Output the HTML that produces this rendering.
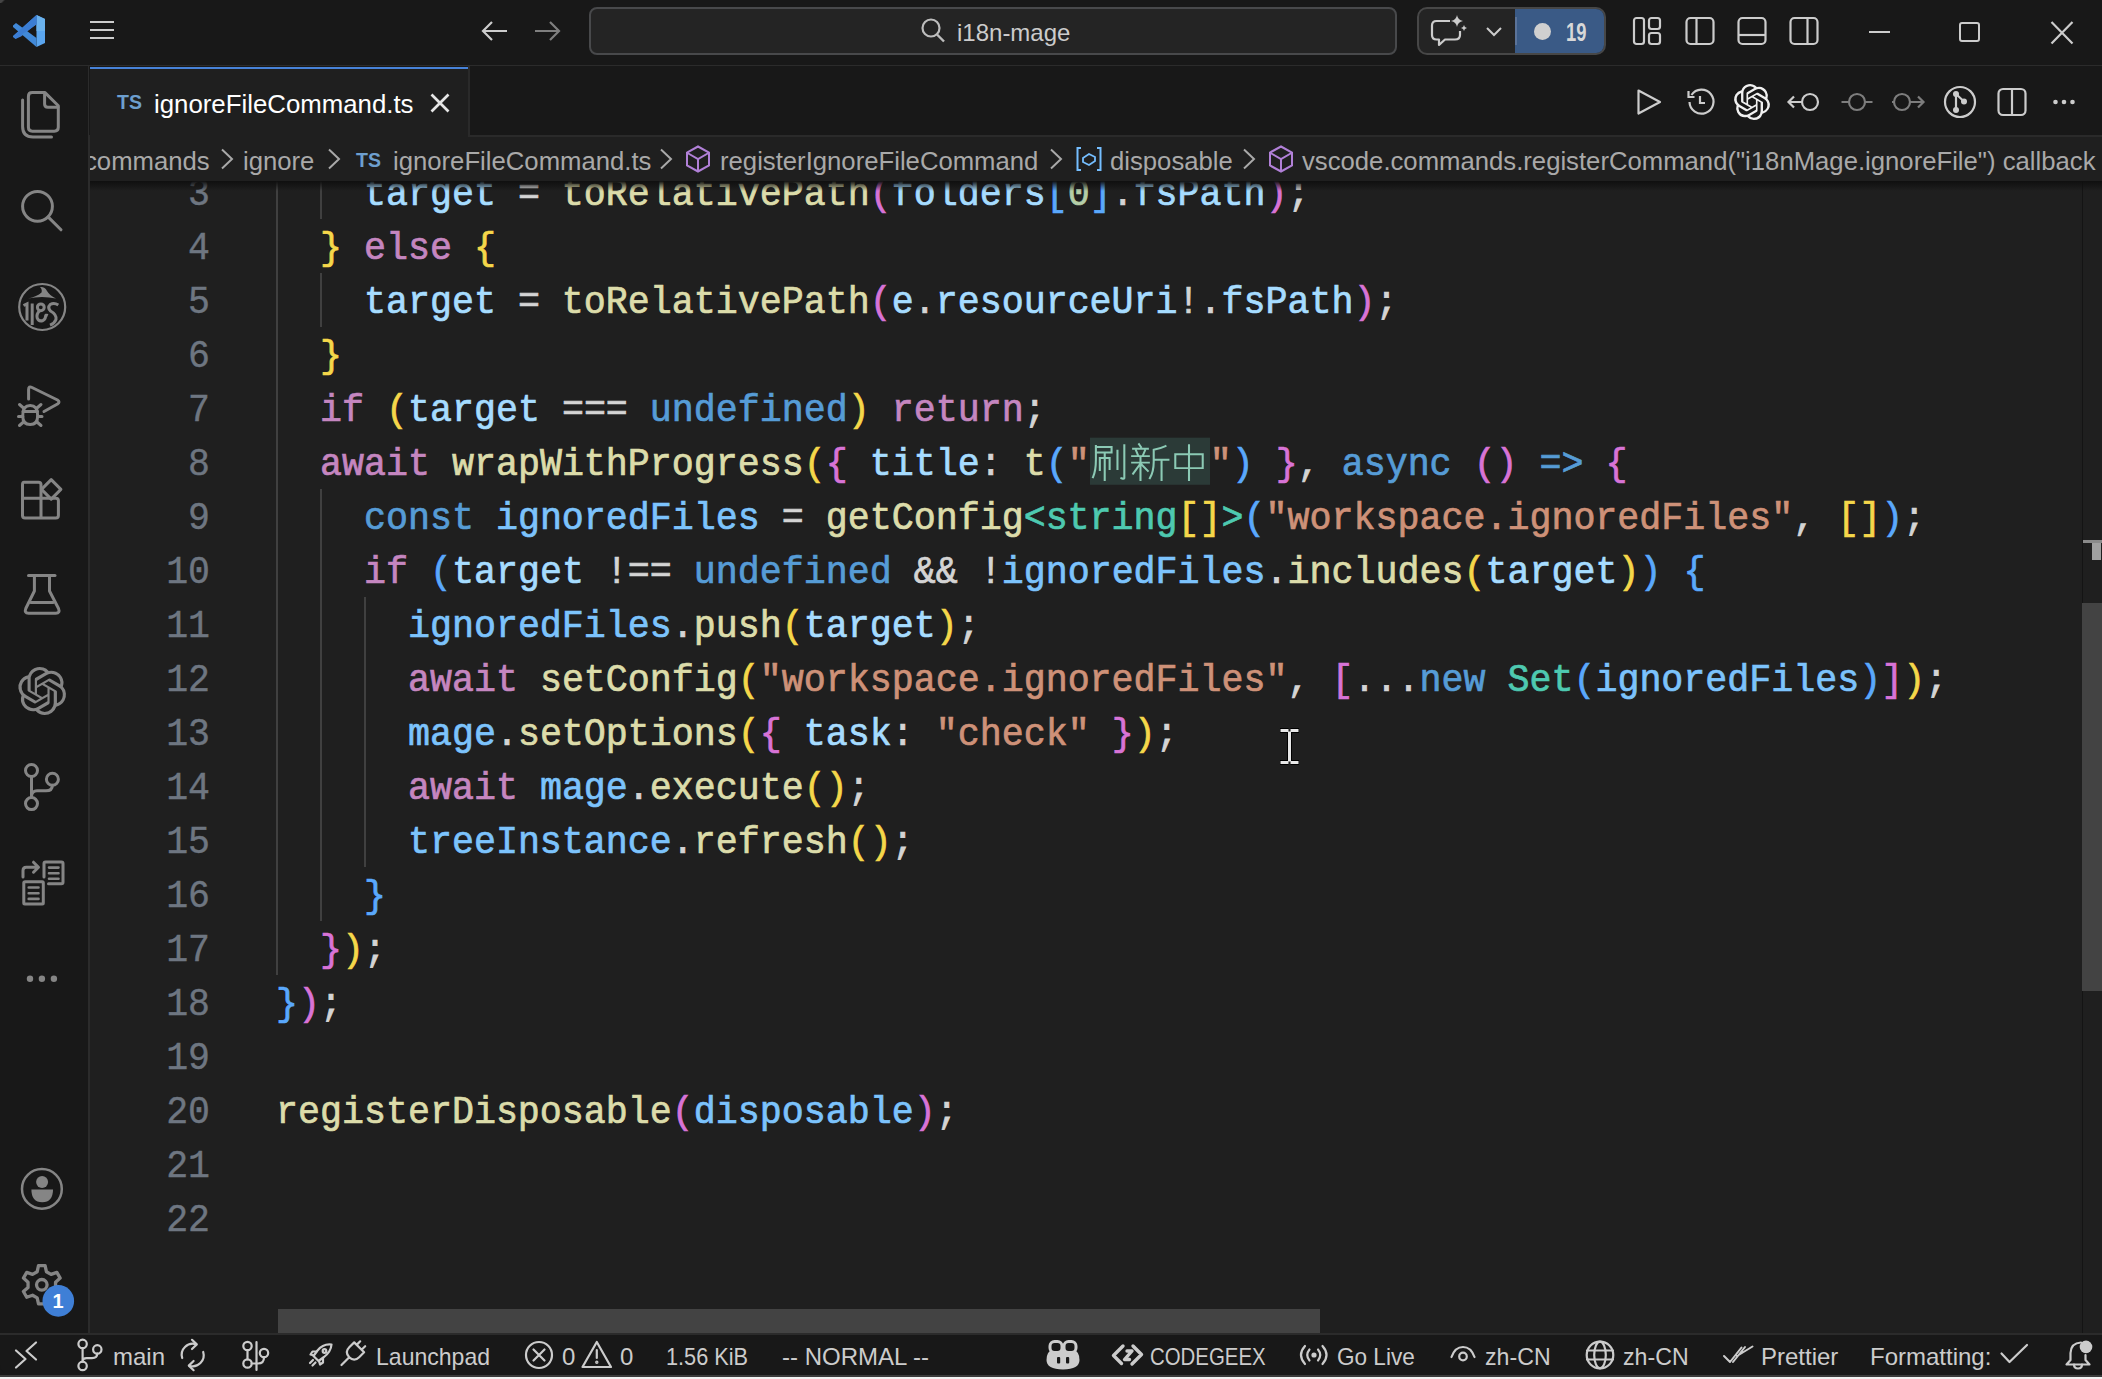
<!DOCTYPE html>
<html><head><meta charset="utf-8">
<style>
*{margin:0;padding:0;box-sizing:border-box}
html,body{width:2102px;height:1379px;overflow:hidden;background:#181818}
body{position:relative;font-family:"Liberation Sans",sans-serif;color:#cccccc}
.abs{position:absolute}
svg{position:absolute;overflow:visible}
#title{left:0;top:0;width:2102px;height:66px;background:#181818;border-bottom:1px solid #2b2b2b}
#act{left:0;top:66px;width:90px;height:1267px;background:#181818;border-right:2px solid #2b2b2b}
#tabs{left:89px;top:66px;width:2013px;height:71px;background:#181818;border-bottom:2px solid #2a2a2a}
#tab{left:90px;top:67px;width:378px;height:70px;background:#1f1f1f;border-top:2px solid #4782d8}
#bc{left:90px;top:137px;width:2012px;height:44px;background:#1f1f1f;overflow:hidden;white-space:nowrap}
#ed{left:90px;top:181px;width:2012px;height:1152px;background:#1f1f1f;overflow:hidden}
#status{left:0;top:1333px;width:2102px;height:42px;background:#181818;border-top:2px solid #2b2b2b;white-space:nowrap;border-radius:0 0 10px 10px}
#bottomstrip{left:0;top:1375px;width:2102px;height:4px;background:linear-gradient(#3a3a3a 0,#3a3a3a 2px,#f2f2f2 2px)}
.code{position:absolute;left:186px;font-family:"Liberation Mono",monospace;font-size:36.65px;line-height:54px;height:54px;white-space:pre;color:#d4d4d4;-webkit-text-stroke:0.7px currentColor;transform:translateY(-1px) scaleY(1.07);transform-origin:0 35px}
.ln{position:absolute;left:0;width:120px;text-align:right;font-family:"Liberation Mono",monospace;font-size:36.53px;line-height:54px;height:54px;color:#6e7681;-webkit-text-stroke:0.4px currentColor;transform:scaleY(1.08);transform-origin:0 40px}
.g{position:absolute;width:2px;background:#404040}
.v{color:#a6dcff}.c{color:#7cc3fc}.f{color:#dcdcaa}.k{color:#c586c0}.b{color:#569cd6}.s{color:#ce9178}.t{color:#4ec9b0}.n{color:#b5cea8}
.y{color:#f5d74a}.p{color:#d873d6}.bl{color:#5aa8fc}
.ui{font-family:"Liberation Sans",sans-serif}
</style></head><body>

<!-- TITLE BAR -->
<div id="title" class="abs">
<!-- vscode logo -->
<svg style="left:0;top:0" width="60" height="64" viewBox="0 0 60 64">
  <path d="M36.5 15 L45 19 L45 43 L36.5 47 Z" fill="#5aa5ee"/>
  <path d="M36.5 15 L45 19 L45 31 L36.5 31 Z" fill="#6ab1ec"/>
  <path d="M36.5 15 L36.5 24 L21 36.5 L15.5 39 L13 37 L13 36 Z" fill="#3f7fd6"/>
  <path d="M13 25.5 L16 23 L36.5 38 L36.5 47 L13 27 Z" fill="#4189d8"/>
  <path d="M36.5 15 L36.5 24.5 L22.5 34 L16 38.5 L13.5 37 L13 36.2 Z" fill="#3b7dd3"/>
</svg>
<!-- hamburger -->
<div class="abs" style="left:90px;top:21px;width:24px;height:2px;background:#cccccc"></div>
<div class="abs" style="left:90px;top:29px;width:24px;height:2px;background:#cccccc"></div>
<div class="abs" style="left:90px;top:37px;width:24px;height:2px;background:#cccccc"></div>
<!-- back / forward -->
<svg style="left:480px;top:18px" width="30" height="26" viewBox="0 0 30 26"><path d="M3 13 H27 M12 4 L3 13 L12 22" fill="none" stroke="#cccccc" stroke-width="2.2"/></svg>
<svg style="left:532px;top:18px" width="30" height="26" viewBox="0 0 30 26"><path d="M3 13 H27 M18 4 L27 13 L18 22" fill="none" stroke="#7f7f7f" stroke-width="2.2"/></svg>
<!-- search box -->
<div class="abs" style="left:589px;top:7px;width:808px;height:48px;border:2px solid #48494b;border-radius:8px;background:#242424"></div>
<svg style="left:918px;top:17px" width="30" height="28" viewBox="0 0 30 28"><circle cx="13" cy="11" r="8.5" fill="none" stroke="#bdbdbd" stroke-width="2.2"/><path d="M19 17.5 L26 24.5" stroke="#bdbdbd" stroke-width="2.4"/></svg>
<div class="abs ui" style="left:957px;top:18px;font-size:24px;line-height:30px;color:#cccccc">i18n-mage</div>
<!-- chat group -->
<div class="abs" style="left:1417px;top:7px;width:189px;height:48px;border:2px solid #474747;border-radius:10px;background:#242424;overflow:hidden">
  <div class="abs" style="left:96px;top:0;width:93px;height:48px;background:#3a5a86"></div>
</div>
<svg style="left:1428px;top:12px" width="42" height="36" viewBox="0 0 42 36">
  <path d="M22 9 H8.5 Q4 9 4 13.5 V23 Q4 27.5 8.5 27.5 H11 V33 L17 27.5 H27 Q32 27.5 32 23 V19" fill="none" stroke="#cccccc" stroke-width="2.2" stroke-linejoin="round"/>
  <path d="M29 3 Q29.8 8.2 35 9 Q29.8 9.8 29 15 Q28.2 9.8 23 9 Q28.2 8.2 29 3 Z" fill="#cccccc"/>
  <path d="M36 13 Q36.4 15.6 39 16 Q36.4 16.4 36 19 Q35.6 16.4 33 16 Q35.6 15.6 36 13 Z" fill="#cccccc"/>
</svg>
<svg style="left:1484px;top:24px" width="20" height="14" viewBox="0 0 20 14"><path d="M3 4 L10 11 L17 4" fill="none" stroke="#cccccc" stroke-width="2"/></svg>
<div class="abs" style="left:1534px;top:22.5px;width:17px;height:17px;border-radius:50%;background:#d0d0d0"></div><div class="abs" style="left:1515px;top:17px;width:2px;height:28px;background:#5b7399"></div>
<div class="abs ui" style="left:1566px;top:17px;font-size:25.5px;line-height:30px;font-weight:bold;color:#d8d8d8;transform:scaleX(0.72);transform-origin:0 0">19</div>
<!-- layout icons -->
<svg style="left:1630px;top:14px" width="36" height="34" viewBox="0 0 36 34">
  <rect x="4" y="4" width="10" height="26" rx="2.5" fill="none" stroke="#cccccc" stroke-width="2.2"/>
  <rect x="19" y="4" width="11" height="11" rx="2.5" fill="none" stroke="#cccccc" stroke-width="2.2"/>
  <rect x="19" y="19" width="11" height="11" rx="2.5" fill="none" stroke="#cccccc" stroke-width="2.2"/>
</svg>
<svg style="left:1682px;top:14px" width="36" height="34" viewBox="0 0 36 34"><rect x="4.5" y="4" width="27" height="26" rx="4" fill="none" stroke="#cccccc" stroke-width="2.2"/><path d="M14.5 4 V30" stroke="#cccccc" stroke-width="2.2"/></svg>
<svg style="left:1734px;top:14px" width="36" height="34" viewBox="0 0 36 34"><rect x="4.5" y="4" width="27" height="26" rx="4" fill="none" stroke="#cccccc" stroke-width="2.2"/><path d="M4.5 21 H31.5" stroke="#cccccc" stroke-width="2.2"/></svg>
<svg style="left:1786px;top:14px" width="36" height="34" viewBox="0 0 36 34"><rect x="4.5" y="4" width="27" height="26" rx="4" fill="none" stroke="#cccccc" stroke-width="2.2"/><path d="M21.5 4 V30" stroke="#cccccc" stroke-width="2.2"/></svg>
<!-- window controls -->
<div class="abs" style="left:1869px;top:31px;width:21px;height:2px;background:#cccccc"></div>
<div class="abs" style="left:1959px;top:22px;width:21px;height:20px;border:2px solid #cccccc;border-radius:3px"></div>
<svg style="left:2048px;top:19px" width="28" height="28" viewBox="0 0 28 28"><path d="M3.5 3 L24.5 24.5 M24.5 3 L3.5 24.5" stroke="#cccccc" stroke-width="2.2"/></svg>
</div>

<!-- ACTIVITY BAR -->
<div id="act" class="abs">
<svg style="left:0;top:0" width="88" height="1267" viewBox="0 66 88 1267">
<g fill="none" stroke="#858585" stroke-width="3" stroke-linejoin="round" stroke-linecap="round">
  <!-- files -->
  <path d="M28.4 96.5 Q28.4 92.6 32.3 92.6 H45 L58.3 105.8 V127.3 Q58.3 131.2 54.4 131.2 H32.3 Q28.4 131.2 28.4 127.3 Z"/>
  <path d="M44.6 93 V104 Q44.6 107.2 47.8 107.2 H58"/>
  <path d="M22.6 100 V126.5 Q22.6 137 33 137 H51.5"/>
  <!-- search -->
  <circle cx="37.5" cy="206.3" r="14.9"/>
  <path d="M48.3 217.1 L61 229.8"/>
  <!-- debug -->
  <path d="M28.6 399 V389.5 Q28.6 385.8 32 387.5 L57.5 400 Q60.5 402 57.5 404 L44 411.5"/>
  <path d="M22.8 415 Q22.8 405.5 30.2 405.5 Q37.6 405.5 37.6 415 V416.5 Q37.6 424.5 30.2 424.5 Q22.8 424.5 22.8 416.5 Z"/>
  <path d="M23 411.5 H37.5 M23.5 408 L19.5 404.5 M37 408 L41 404.5 M22.8 416.5 H18.5 M37.6 416.5 H42 M23.5 422 L19.5 425.5 M37 422 L41 425.5"/>
  <!-- extensions -->
  <path d="M24 482.2 H38.5 Q41 482.2 41 484.7 V498.3 H22.5 V484.7 Q22.5 482.2 24 482.2 Z"/>
  <path d="M22.5 498.3 V515.5 Q22.5 518.1 25 518.1 H55.8 Q58.4 518.1 58.4 515.5 V500.8 Q58.4 498.3 55.8 498.3 H41 V518.1"/>
  <path d="M51.2 479.6 L60.9 489.4 L51.2 499.1 L41.5 489.4 Z"/>
  <!-- flask -->
  <path d="M28.5 575.5 H55"/>
  <path d="M34.4 575.5 V591 L25.8 608.5 Q24 613.2 28.5 613.2 H55.8 Q60.4 613.2 58.5 608.5 L49.5 591 V575.5"/>
  <path d="M31 602.5 H53"/>
  <!-- git -->
  <circle cx="31.5" cy="770.5" r="6"/>
  <circle cx="31.5" cy="803.6" r="6"/>
  <circle cx="52.4" cy="779.2" r="6"/>
  <path d="M31.5 776.5 V797.6 M52.4 785.2 Q52.4 790.8 46 790.8 H37 Q32 790.8 31.5 796"/>
  <!-- compare docs -->
  <path d="M44 877 V863.5 Q44 862 45.5 862 H61.5 Q63 862 63 863.5 V882.3 Q63 883.8 61.5 883.8 H48.5"/>
  <path d="M25.3 881.7 H42.3 Q43.3 881.7 43.3 882.7 V903 Q43.3 904 42.3 904 H24.8 Q23.8 904 23.8 903 V882.7 Q23.8 881.7 25.3 881.7 Z"/>
  <path d="M23 877 V870.5 Q23 867.2 26.3 867.2 H38 M33.5 862.2 L38.5 867.2 L33.5 872.2"/>
</g>
<g stroke="#858585" stroke-width="2.6" stroke-linecap="round">
  <path d="M49 867.6 H58.5 M49 873.2 H58.5 M49 878.7 H58.5 M28.7 887.5 H38.5 M28.7 893.2 H38.5 M28.7 898.9 H38.5"/>
</g>
<!-- i18n -->
<circle cx="42.2" cy="307" r="23" fill="none" stroke="#858585" stroke-width="2.2"/>
<path d="M28 298.5 Q42 295.5 56 298.5 Q50 296 47 291 Q45 286.5 40 287 Q42.5 289.5 41.5 292.5 Q37 296.5 28 298.5 Z" fill="#858585"/>
<g fill="none" stroke="#858585" stroke-width="3">
  <path d="M23.5 305.5 L27 303.8 V320.5"/>
  <path d="M32.2 303.5 V325"/>
  <circle cx="40.8" cy="307.3" r="3.4"/>
  <path d="M39.5 310.8 Q36.2 314 37.2 318 Q38.8 322 43 320.5 Q45.5 319 45.5 316.5 Q45.5 314.5 47.8 315.5"/>
  <path d="M58.3 305 Q54 302.2 50.2 304.5 Q47.2 307.5 50.5 311 Q56.8 314.5 56 319.5 Q54.5 323.5 50 325.2"/>
</g>
<!-- openai -->
<svg x="18.1" y="666.6" width="48.2" height="48.8" viewBox="0 0 24 24"><path fill="#858585" d="M22.28 9.82a5.98 5.98 0 0 0-.52-4.91 6.05 6.05 0 0 0-6.51-2.9A6.07 6.07 0 0 0 4.98 4.18a5.98 5.98 0 0 0-4 2.9 6.05 6.05 0 0 0 .74 7.1 5.98 5.98 0 0 0 .51 4.91 6.05 6.050 0 0 0 6.51 2.9A5.98 5.98 0 0 0 13.26 24a6.06 6.06 0 0 0 5.77-4.21 5.99 5.99 0 0 0 4-2.9 6.06 6.06 0 0 0-.75-7.07zM13.26 22.43a4.48 4.48 0 0 1-2.88-1.04l.14-.08 4.78-2.76a.8.8 0 0 0 .39-.68v-6.74l2.02 1.17a.07.07 0 0 1 .04.05v5.58a4.5 4.5 0 0 1-4.49 4.5zM3.6 18.3a4.47 4.47 0 0 1-.53-3.01l.14.08 4.78 2.76a.77.77 0 0 0 .78 0l5.84-3.37v2.33a.08.08 0 0 1-.03.06l-4.83 2.79a4.5 4.5 0 0 1-6.14-1.64zM2.34 7.9a4.49 4.49 0 0 1 2.37-1.97v5.68a.77.77 0 0 0 .39.68l5.81 3.35-2.02 1.17a.08.08 0 0 1-.07 0l-4.83-2.79A4.5 4.5 0 0 1 2.34 7.87zm16.6 3.86l-5.84-3.39L15.12 7.2a.08.08 0 0 1 .07 0l4.83 2.79a4.49 4.49 0 0 1-.68 8.1v-5.68a.79.79 0 0 0-.41-.67zm2.01-3.02l-.14-.09-4.77-2.78a.78.78 0 0 0-.78 0L9.41 9.23V6.9a.07.07 0 0 1 .03-.06l4.83-2.79a4.5 4.5 0 0 1 6.68 4.66zM8.31 12.86L6.290 11.7a.08.08 0 0 1-.04-.06V6.07a4.5 4.5 0 0 1 7.38-3.45l-.14.08L8.71 5.46a.8.8 0 0 0-.39.68zm1.1-2.37l2.6-1.5 2.6 1.5v3l-2.6 1.5-2.6-1.5z"/></svg>
<!-- more -->
<circle cx="30" cy="978.8" r="3.2" fill="#858585"/><circle cx="41.9" cy="978.8" r="3.2" fill="#858585"/><circle cx="53.9" cy="978.8" r="3.2" fill="#858585"/>
<!-- account -->
<circle cx="41.9" cy="1188.9" r="19.9" fill="none" stroke="#858585" stroke-width="2.5"/>
<circle cx="42.1" cy="1182" r="6" fill="#858585"/>
<path d="M31.4 1189.5 H53 Q53 1202.3 42.2 1202.3 Q31.4 1202.3 31.4 1189.5 Z" fill="#858585"/>
<!-- gear -->
<g fill="none" stroke="#858585" stroke-width="3" stroke-linejoin="round">
<g transform="translate(41.8,1286) scale(1.1) translate(-41.6,-1284)"><path d="M38.6 1265.5 H44.6 L45.8 1271 L50 1273.4 L55.3 1271.6 L58.3 1276.8 L54.1 1280.5 V1285.3 L58.3 1289 L55.3 1294.2 L50 1292.4 L45.8 1294.8 L44.6 1300.3 H38.6 L37.4 1294.8 L33.2 1292.4 L27.9 1294.2 L24.9 1289 L29.1 1285.3 V1280.5 L24.9 1276.8 L27.9 1271.6 L33.2 1273.4 L37.4 1271 Z"/>
<circle cx="41.6" cy="1282.9" r="4.8"/></g>
</g>
<circle cx="58.3" cy="1300.9" r="15.8" fill="#3f7fd6"/>
</svg>
<div class="abs ui" style="left:42px;top:1222px;width:32px;text-align:center;font-size:20px;line-height:26px;font-weight:bold;color:#ffffff">1</div>
</div>

<!-- TABS -->
<div id="tabs" class="abs"></div>
<div class="abs" style="left:468px;top:66px;width:2px;height:70px;background:#2a2a2a"></div>
<div id="tab" class="abs">
<div class="abs ui" style="left:27px;top:21px;font-size:19.5px;line-height:24px;font-weight:bold;color:#6d9fcf">TS</div>
<div class="abs ui" style="left:64px;top:18px;font-size:25.8px;line-height:34px;color:#ffffff">ignoreFileCommand.ts</div>
<svg style="left:338px;top:23px" width="24" height="22" viewBox="0 0 24 22"><path d="M3.5 2.5 L20.5 19.5 M20.5 2.5 L3.5 19.5" stroke="#e6e6e6" stroke-width="2.7"/></svg>
</div>
<!-- editor actions -->
<svg style="left:1632px;top:86px" width="34" height="32" viewBox="0 0 34 32"><path d="M6.5 4.5 L28 16 L6.5 27.5 Z" fill="none" stroke="#cccccc" stroke-width="2.2" stroke-linejoin="round"/></svg>
<svg style="left:1684px;top:86px" width="34" height="32" viewBox="0 0 34 32"><path d="M7.5 9 A12 12 0 1 1 5.5 16" fill="none" stroke="#cccccc" stroke-width="2.2"/><path d="M4.5 5 V11 H10.5" fill="none" stroke="#cccccc" stroke-width="2.2"/><path d="M16 10 V17 H21" fill="none" stroke="#cccccc" stroke-width="2.2"/></svg>
<svg style="left:1734px;top:84px" width="36" height="36" viewBox="0 0 24 24"><path fill="#f0f0f0" d="M22.28 9.82a5.98 5.98 0 0 0-.52-4.91 6.05 6.05 0 0 0-6.51-2.9A6.07 6.07 0 0 0 4.98 4.18a5.98 5.98 0 0 0-4 2.9 6.05 6.05 0 0 0 .74 7.1 5.98 5.98 0 0 0 .51 4.91 6.05 6.05 0 0 0 6.51 2.9A5.98 5.98 0 0 0 13.26 24a6.06 6.06 0 0 0 5.77-4.21 5.99 5.99 0 0 0 4-2.9 6.06 6.06 0 0 0-.75-7.07zM13.26 22.43a4.48 4.48 0 0 1-2.88-1.04l.14-.08 4.78-2.76a.8.8 0 0 0 .39-.68v-6.74l2.02 1.17a.07.07 0 0 1 .04.05v5.58a4.5 4.5 0 0 1-4.49 4.5zM3.6 18.3a4.47 4.47 0 0 1-.53-3.01l.14.08 4.78 2.76a.77.77 0 0 0 .78 0l5.84-3.37v2.33a.08.08 0 0 1-.03.06l-4.83 2.79a4.5 4.5 0 0 1-6.14-1.64zM2.34 7.9a4.49 4.49 0 0 1 2.37-1.97v5.68a.77.77 0 0 0 .39.68l5.81 3.35-2.02 1.17a.08.08 0 0 1-.07 0l-4.83-2.79A4.5 4.5 0 0 1 2.34 7.87zm16.6 3.86l-5.84-3.39L15.12 7.2a.08.08 0 0 1 .07 0l4.83 2.79a4.49 4.49 0 0 1-.68 8.1v-5.68a.79.79 0 0 0-.41-.67zm2.01-3.02l-.14-.09-4.77-2.78a.78.78 0 0 0-.78 0L9.41 9.23V6.9a.07.07 0 0 1 .03-.06l4.83-2.79a4.5 4.5 0 0 1 6.68 4.66zM8.31 12.86L6.29 11.7a.08.08 0 0 1-.04-.06V6.07a4.5 4.5 0 0 1 7.38-3.45l-.14.08L8.71 5.46a.8.8 0 0 0-.39.68zm1.1-2.37l2.6-1.5 2.6 1.5v3l-2.6 1.5-2.6-1.5z"/></svg>
<svg style="left:1784px;top:84px" width="40" height="36" viewBox="0 0 40 36"><circle cx="26" cy="18" r="8" fill="none" stroke="#cccccc" stroke-width="2.2"/><path d="M18 18 H5 M10 12.5 L4.5 18 L10 23.5" fill="none" stroke="#cccccc" stroke-width="2.2"/></svg>
<svg style="left:1838px;top:84px" width="38" height="36" viewBox="0 0 38 36"><circle cx="19" cy="18" r="8" fill="none" stroke="#7d7d7d" stroke-width="2.2"/><path d="M3.5 18 H11 M27 18 H34.5" fill="none" stroke="#7d7d7d" stroke-width="2.2"/></svg>
<svg style="left:1888px;top:84px" width="40" height="36" viewBox="0 0 40 36"><circle cx="14" cy="18" r="8" fill="none" stroke="#7d7d7d" stroke-width="2.2"/><path d="M4 18 H6 M22 18 H35 M30 12.5 L35.5 18 L30 23.5" fill="none" stroke="#7d7d7d" stroke-width="2.2"/></svg>
<svg style="left:1942px;top:84px" width="36" height="36" viewBox="0 0 36 36"><circle cx="18" cy="18" r="15" fill="none" stroke="#cccccc" stroke-width="2.2"/><circle cx="14" cy="10" r="3" fill="#cccccc"/><circle cx="14" cy="26" r="3" fill="#cccccc"/><circle cx="22" cy="17.5" r="3" fill="#cccccc"/><path d="M14 10 V26 M14 10 L22 17.5" stroke="#cccccc" stroke-width="2.2"/></svg>
<svg style="left:1995px;top:86px" width="34" height="32" viewBox="0 0 34 32"><rect x="3.5" y="3" width="27" height="26" rx="4.5" fill="none" stroke="#cccccc" stroke-width="2.2"/><path d="M17 3 V29" stroke="#cccccc" stroke-width="2.2"/></svg>
<svg style="left:2050px;top:92px" width="28" height="20" viewBox="0 0 28 20"><circle cx="5.5" cy="10" r="2.3" fill="#cccccc"/><circle cx="14" cy="10" r="2.3" fill="#cccccc"/><circle cx="22.5" cy="10" r="2.3" fill="#cccccc"/></svg>

<!-- BREADCRUMBS -->
<div id="bc" class="abs">
<div class="abs ui" style="left:-6px;top:7px;font-size:25.7px;line-height:34px;color:#a9a9a9">commands</div>
<svg style="left:129px;top:11px" width="16" height="22" viewBox="0 0 16 22"><path d="M3 1.5 L13 11 L3 20.5" fill="none" stroke="#a9a9a9" stroke-width="2"/></svg>
<div class="abs ui" style="left:153px;top:7px;font-size:25.7px;line-height:34px;color:#a9a9a9">ignore</div>
<svg style="left:236px;top:11px" width="16" height="22" viewBox="0 0 16 22"><path d="M3 1.5 L13 11 L3 20.5" fill="none" stroke="#a9a9a9" stroke-width="2"/></svg>
<div class="abs ui" style="left:266px;top:12px;font-size:19.5px;line-height:22px;font-weight:bold;color:#6d9fcf">TS</div>
<div class="abs ui" style="left:303px;top:7px;font-size:25.7px;line-height:34px;color:#a9a9a9">ignoreFileCommand.ts</div>
<svg style="left:568px;top:11px" width="16" height="22" viewBox="0 0 16 22"><path d="M3 1.5 L13 11 L3 20.5" fill="none" stroke="#a9a9a9" stroke-width="2"/></svg>
<svg style="left:593px;top:7px" width="30" height="30" viewBox="0 0 30 30"><path d="M15 2.5 L26 8.5 V21.5 L15 27.5 L4 21.5 V8.5 Z" fill="none" stroke="#b180d7" stroke-width="2"/><path d="M4.5 9 L15 15 L25.5 9 M15 15 V27" fill="none" stroke="#b180d7" stroke-width="2"/></svg>
<div class="abs ui" style="left:630px;top:7px;font-size:25.7px;line-height:34px;color:#a9a9a9">registerIgnoreFileCommand</div>
<svg style="left:958px;top:11px" width="16" height="22" viewBox="0 0 16 22"><path d="M3 1.5 L13 11 L3 20.5" fill="none" stroke="#a9a9a9" stroke-width="2"/></svg>
<svg style="left:984px;top:7px" width="30" height="30" viewBox="0 0 30 30"><path d="M7 4 H3.5 V26 H7 M23 4 H26.5 V26 H23" fill="none" stroke="#75beff" stroke-width="2"/><path d="M9 14 L15 10 L21 13 V17 L15 21 L9 18 Z" fill="none" stroke="#75beff" stroke-width="1.8"/></svg>
<div class="abs ui" style="left:1020px;top:7px;font-size:25.7px;line-height:34px;color:#a9a9a9">disposable</div>
<svg style="left:1151px;top:11px" width="16" height="22" viewBox="0 0 16 22"><path d="M3 1.5 L13 11 L3 20.5" fill="none" stroke="#a9a9a9" stroke-width="2"/></svg>
<svg style="left:1176px;top:7px" width="30" height="30" viewBox="0 0 30 30"><path d="M15 2.5 L26 8.5 V21.5 L15 27.5 L4 21.5 V8.5 Z" fill="none" stroke="#b180d7" stroke-width="2"/><path d="M4.5 9 L15 15 L25.5 9 M15 15 V27" fill="none" stroke="#b180d7" stroke-width="2"/></svg>
<div class="abs ui" style="left:1212px;top:7px;font-size:25.7px;line-height:34px;color:#a9a9a9">vscode.commands.registerCommand("i18nMage.ignoreFile") callback</div>
</div>

<!-- EDITOR -->
<div id="ed" class="abs">
<div class="ln" style="top:-12px">3</div>
<div class="code" style="top:-12px">    <span class="v">target</span> = <span class="f">toRelativePath</span><span class="p">(</span><span class="v">folders</span><span class="bl">[</span><span class="n">0</span><span class="bl">]</span>.<span class="v">fsPath</span><span class="p">)</span>;</div>
<div class="ln" style="top:42px">4</div>
<div class="code" style="top:42px">  <span class="y">}</span> <span class="k">else</span> <span class="y">{</span></div>
<div class="ln" style="top:96px">5</div>
<div class="code" style="top:96px">    <span class="v">target</span> = <span class="f">toRelativePath</span><span class="p">(</span><span class="v">e</span>.<span class="v">resourceUri</span>!.<span class="v">fsPath</span><span class="p">)</span>;</div>
<div class="ln" style="top:150px">6</div>
<div class="code" style="top:150px">  <span class="y">}</span></div>
<div class="ln" style="top:204px">7</div>
<div class="code" style="top:204px">  <span class="k">if</span> <span class="y">(</span><span class="v">target</span> === <span class="b">undefined</span><span class="y">)</span> <span class="k">return</span>;</div>
<div class="ln" style="top:258px">8</div>
<div class="code" style="top:258px">  <span class="k">await</span> <span class="f">wrapWithProgress</span><span class="y">(</span><span class="p">{</span> <span class="v">title</span>: <span class="f">t</span><span class="bl">(</span><span class="s">"<span class="cjk" style="display:inline-block;width:120px;height:44px;vertical-align:top;position:relative;top:2px;background:#2b3a37"><svg style="left:0;top:0" width="120" height="46" viewBox="0 0 120 46"><g fill="none" stroke="#8ccab5" stroke-width="2.1" stroke-linecap="square" transform="translate(1,3.5) scale(0.98,0.86)">
<path d="M5 6 H21 V12 H5 M5 5 V20 Q5 32 2 39"/><path d="M9 18 V31 M9 18 H19 V30 M14 13 V42"/><path d="M27 10 V30 M34 4 V40 Q34 41 31 40"/>
<path d="M49 3 L51 6 M43 8 H58 M46 10 L48 15 M55 10 L53 15 M42 16 H59 M42 23 H59 M50.5 16 V42 M50.5 24 L43 35 M50.5 24 L58 32"/>
<path d="M76 5 Q70 8 64 9 V22 Q64 33 60 40 M64 20 H79 M72 20 V42"/>
<path d="M86 14 H114 V29 H86 Z M100 4 V42"/>
</g></svg></span>"</span><span class="bl">)</span> <span class="p">}</span>, <span class="b">async</span> <span class="p">()</span> <span class="b">=&gt;</span> <span class="p">{</span></div>
<div class="ln" style="top:312px">9</div>
<div class="code" style="top:312px">    <span class="b">const</span> <span class="c">ignoredFiles</span> = <span class="f">getConfig</span><span class="t">&lt;string</span><span class="y">[]</span><span class="t">&gt;</span><span class="bl">(</span><span class="s">"workspace.ignoredFiles"</span>, <span class="y">[]</span><span class="bl">)</span>;</div>
<div class="ln" style="top:366px">10</div>
<div class="code" style="top:366px">    <span class="k">if</span> <span class="bl">(</span><span class="v">target</span> !== <span class="b">undefined</span> &amp;&amp; !<span class="c">ignoredFiles</span>.<span class="f">includes</span><span class="y">(</span><span class="v">target</span><span class="y">)</span><span class="bl">)</span> <span class="bl">{</span></div>
<div class="ln" style="top:420px">11</div>
<div class="code" style="top:420px">      <span class="c">ignoredFiles</span>.<span class="f">push</span><span class="y">(</span><span class="v">target</span><span class="y">)</span>;</div>
<div class="ln" style="top:474px">12</div>
<div class="code" style="top:474px">      <span class="k">await</span> <span class="f">setConfig</span><span class="y">(</span><span class="s">"workspace.ignoredFiles"</span>, <span class="p">[</span>...<span class="b">new</span> <span class="t">Set</span><span class="bl">(</span><span class="c">ignoredFiles</span><span class="bl">)</span><span class="p">]</span><span class="y">)</span>;</div>
<div class="ln" style="top:528px">13</div>
<div class="code" style="top:528px">      <span class="c">mage</span>.<span class="f">setOptions</span><span class="y">(</span><span class="p">{</span> <span class="v">task</span>: <span class="s">"check"</span> <span class="p">}</span><span class="y">)</span>;</div>
<div class="ln" style="top:582px">14</div>
<div class="code" style="top:582px">      <span class="k">await</span> <span class="c">mage</span>.<span class="f">execute</span><span class="y">()</span>;</div>
<div class="ln" style="top:636px">15</div>
<div class="code" style="top:636px">      <span class="c">treeInstance</span>.<span class="f">refresh</span><span class="y">()</span>;</div>
<div class="ln" style="top:690px">16</div>
<div class="code" style="top:690px">    <span class="bl">}</span></div>
<div class="ln" style="top:744px">17</div>
<div class="code" style="top:744px">  <span class="p">}</span><span class="y">)</span>;</div>
<div class="ln" style="top:798px">18</div>
<div class="code" style="top:798px"><span class="bl">}</span><span class="p">)</span>;</div>
<div class="ln" style="top:852px">19</div>
<div class="ln" style="top:906px">20</div>
<div class="code" style="top:906px"><span class="f">registerDisposable</span><span class="p">(</span><span class="c">disposable</span><span class="p">)</span>;</div>
<div class="ln" style="top:960px">21</div>
<div class="ln" style="top:1014px">22</div>
<div class="g" style="left:186px;top:-16px;height:810px"></div>
<div class="g" style="left:230px;top:-16px;height:54px"></div>
<div class="g" style="left:230px;top:92px;height:54px"></div>
<div class="g" style="left:230px;top:308px;height:432px"></div>
<div class="g" style="left:274px;top:416px;height:270px"></div>

<!-- selection-free extras -->
<div class="abs" style="left:188px;top:1128px;width:1042px;height:24px;background:#434343"></div>
<div class="abs" style="left:1992px;top:0;width:1px;height:1152px;background:#141414"></div>
<div class="abs" style="left:1993px;top:359px;width:19px;height:3px;background:#8a8a8a"></div>
<div class="abs" style="left:2002px;top:362px;width:9px;height:17px;background:#a0a0a0"></div>
<div class="abs" style="left:1992px;top:422px;width:20px;height:388px;background:#434343"></div>
<div class="abs" style="left:0;top:0;width:2012px;height:10px;background:linear-gradient(#0f0f0f,rgba(31,31,31,0))"></div>
<svg style="left:1190px;top:548px" width="20" height="36" viewBox="0 0 20 36"><path d="M0 1.5 H8.5 M10.5 1.5 H19 M9.5 3 V31 M0 33.5 H8.5 M10.5 33.5 H19" stroke="#000" stroke-width="5"/><path d="M0.5 1.5 H8.5 M10.5 1.5 H18.5 M9.5 2.5 V32.5 M0.5 33.5 H8.5 M10.5 33.5 H18.5" stroke="#e8e8e8" stroke-width="3"/></svg>
</div>

<!-- STATUS -->
<div id="status" class="abs"></div>
<svg style="left:0;top:1333px" width="2102" height="46" viewBox="0 1333 2102 46">
<g fill="none" stroke="#cccccc" stroke-width="2.2" stroke-linecap="round" stroke-linejoin="round">
  <!-- remote -->
  <path d="M36 1342.5 L26.5 1351 L36 1359.5 M16 1350.5 L25.5 1359 L16 1367.5"/>
  <!-- branch -->
  <circle cx="82.6" cy="1343.9" r="4.2"/><circle cx="82.6" cy="1365.9" r="4.2"/><circle cx="97.3" cy="1349.4" r="4.2"/>
  <path d="M82.6 1348.1 V1361.7 M97.3 1353.6 Q97.3 1358.2 92 1358.2 H86.5 Q82.8 1358.2 82.6 1361"/>
  <!-- sync -->
  <path d="M182.2 1358 A11 11 0 0 1 196 1344.3 M203.2 1352 A11 11 0 0 1 189.4 1365.7"/>
  <path d="M192 1339.8 L196.8 1344.4 L192 1349 M193.6 1361 L188.8 1365.6 L193.6 1370.2"/>
  <!-- git graph -->
  <circle cx="247.5" cy="1346" r="4.2"/><circle cx="247.5" cy="1363.5" r="4.2"/><circle cx="264" cy="1353" r="4.2"/>
  <path d="M247.5 1350.2 V1359.3 M256.5 1342 V1370 M264 1357.2 Q264 1363.5 258 1363.5 H251.7"/>
  <!-- rocket -->
  <path d="M331.5 1344.5 Q323 1343.5 317.5 1350.5 L313.5 1356 L318.5 1361 L324 1357 Q331 1351.5 331.5 1344.5 Z"/>
  <circle cx="324.5" cy="1351" r="1.8"/>
  <path d="M316.5 1351.5 L312.5 1351.5 L310.5 1354.5 L314 1355.5 M323 1358.5 L323 1362.5 L320 1364.5 L319 1361 M313 1360 L310 1363 M315.5 1362.5 L312.5 1365.5"/>
  <!-- plug -->
  <g transform="translate(353.5,1353) rotate(45)"><path d="M-7 -8 H7 V-1 Q7 6 0 6 Q-7 6 -7 -1 Z M-3.5 -8 V-13 M3.5 -8 V-13 M0 6 V17"/></g>
  <!-- error -->
  <circle cx="539" cy="1355" r="13"/>
  <path d="M533.5 1349.5 L544.5 1360.5 M544.5 1349.5 L533.5 1360.5"/>
  <!-- warning -->
  <path d="M596.8 1342 L611 1367 H582.5 Z"/>
  <path d="M596.8 1350 V1358"/><circle cx="596.8" cy="1362.3" r="0.6" fill="#cccccc"/>
  <!-- codegeex -->
  <path d="M1123 1346 L1113.5 1355.5 L1121.5 1363.5 M1133 1346 L1141.5 1354.5 L1132 1364 M1127 1351 H1132 L1124.5 1359.5 H1129.5" stroke-width="3.4"/>
  <!-- broadcast -->
  <path d="M1305 1346 Q1297 1355 1305 1364 M1322.5 1346 Q1330.5 1355 1322.5 1364 M1309.5 1349.5 Q1305 1355 1309.5 1360.5 M1318 1349.5 Q1322.5 1355 1318 1360.5"/>
  <!-- eye -->
  <path d="M1451.5 1357 Q1455 1347 1463 1347 Q1471 1347 1474.5 1357"/>
  <circle cx="1463" cy="1356.5" r="3.8"/>
  <!-- globe -->
  <circle cx="1600" cy="1355" r="13.3"/>
  <ellipse cx="1600" cy="1355" rx="5.8" ry="13.3"/>
  <path d="M1587 1350.5 H1613 M1587 1359.5 H1613"/>
  <!-- double check -->
  <path d="M1724 1356 L1730 1362 L1741.5 1347.5 M1733 1362 L1745 1347 M1737 1356 L1752.5 1346.5" stroke-width="2"/>
  <!-- check -->
  <path d="M2001.5 1353.5 L2009.5 1362 L2027 1345"/>
  <!-- bell -->
  <path d="M2081 1342.5 Q2071 1343 2070.5 1353 V1360 L2066.5 1364.5 H2089.5 L2085.5 1360 V1355"/>
  <path d="M2074 1364.5 Q2074 1368.5 2078 1368.5 Q2082 1368.5 2082 1364.5"/>
</g>
<circle cx="2086" cy="1346.9" r="6.3" fill="#cccccc"/><circle cx="1314" cy="1355" r="2.6" fill="#cccccc"/>
<!-- copilot -->
<path fill="#cccccc" d="M1046.5 1360 Q1046.5 1351.5 1052.5 1349.5 H1073.5 Q1079.5 1351.5 1079.5 1360 Q1079.5 1369.3 1063 1369.5 Q1046.5 1369.3 1046.5 1360 Z"/>
<rect x="1050" y="1341.5" width="12" height="11" rx="4.5" fill="#181818" stroke="#cccccc" stroke-width="3"/>
<rect x="1064" y="1341.5" width="12" height="11" rx="4.5" fill="#181818" stroke="#cccccc" stroke-width="3"/>
<rect x="1057" y="1357" width="3.2" height="6.5" rx="1" fill="#181818"/><rect x="1066" y="1357" width="3.2" height="6.5" rx="1" fill="#181818"/>
</svg>
<div class="abs ui" style="left:113px;top:1342px;font-size:24px;line-height:30px;color:#cccccc">main</div>
<div class="abs ui" style="left:376px;top:1342px;font-size:24px;line-height:30px;color:#cccccc;transform:scaleX(0.96);transform-origin:0 0">Launchpad</div>
<div class="abs ui" style="left:562px;top:1342px;font-size:24px;line-height:30px;color:#cccccc">0</div>
<div class="abs ui" style="left:620px;top:1342px;font-size:24px;line-height:30px;color:#cccccc">0</div>
<div class="abs ui" style="left:666px;top:1342px;font-size:24px;line-height:30px;color:#cccccc;transform:scaleX(0.905);transform-origin:0 0">1.56 KiB</div>
<div class="abs ui" style="left:782px;top:1342px;font-size:24px;line-height:30px;color:#cccccc">-- NORMAL --</div>
<div class="abs ui" style="left:1150px;top:1342px;font-size:24px;line-height:30px;color:#cccccc;transform:scaleX(0.85);transform-origin:0 0">CODEGEEX</div>
<div class="abs ui" style="left:1337px;top:1342px;font-size:24px;line-height:30px;color:#cccccc;transform:scaleX(0.94);transform-origin:0 0">Go Live</div>
<div class="abs ui" style="left:1485px;top:1342px;font-size:24px;line-height:30px;color:#cccccc;transform:scaleX(0.965);transform-origin:0 0">zh-CN</div>
<div class="abs ui" style="left:1623px;top:1342px;font-size:24px;line-height:30px;color:#cccccc;transform:scaleX(0.965);transform-origin:0 0">zh-CN</div>
<div class="abs ui" style="left:1761px;top:1342px;font-size:24px;line-height:30px;color:#cccccc">Prettier</div>
<div class="abs ui" style="left:1870px;top:1342px;font-size:24px;line-height:30px;color:#cccccc">Formatting:</div>
<div id="bottomstrip" class="abs"></div>
<div class="abs" style="left:0;top:0;width:5px;height:3px;background:linear-gradient(135deg,#444 0,#444 40%,rgba(24,24,24,0) 70%)"></div>
</body></html>
